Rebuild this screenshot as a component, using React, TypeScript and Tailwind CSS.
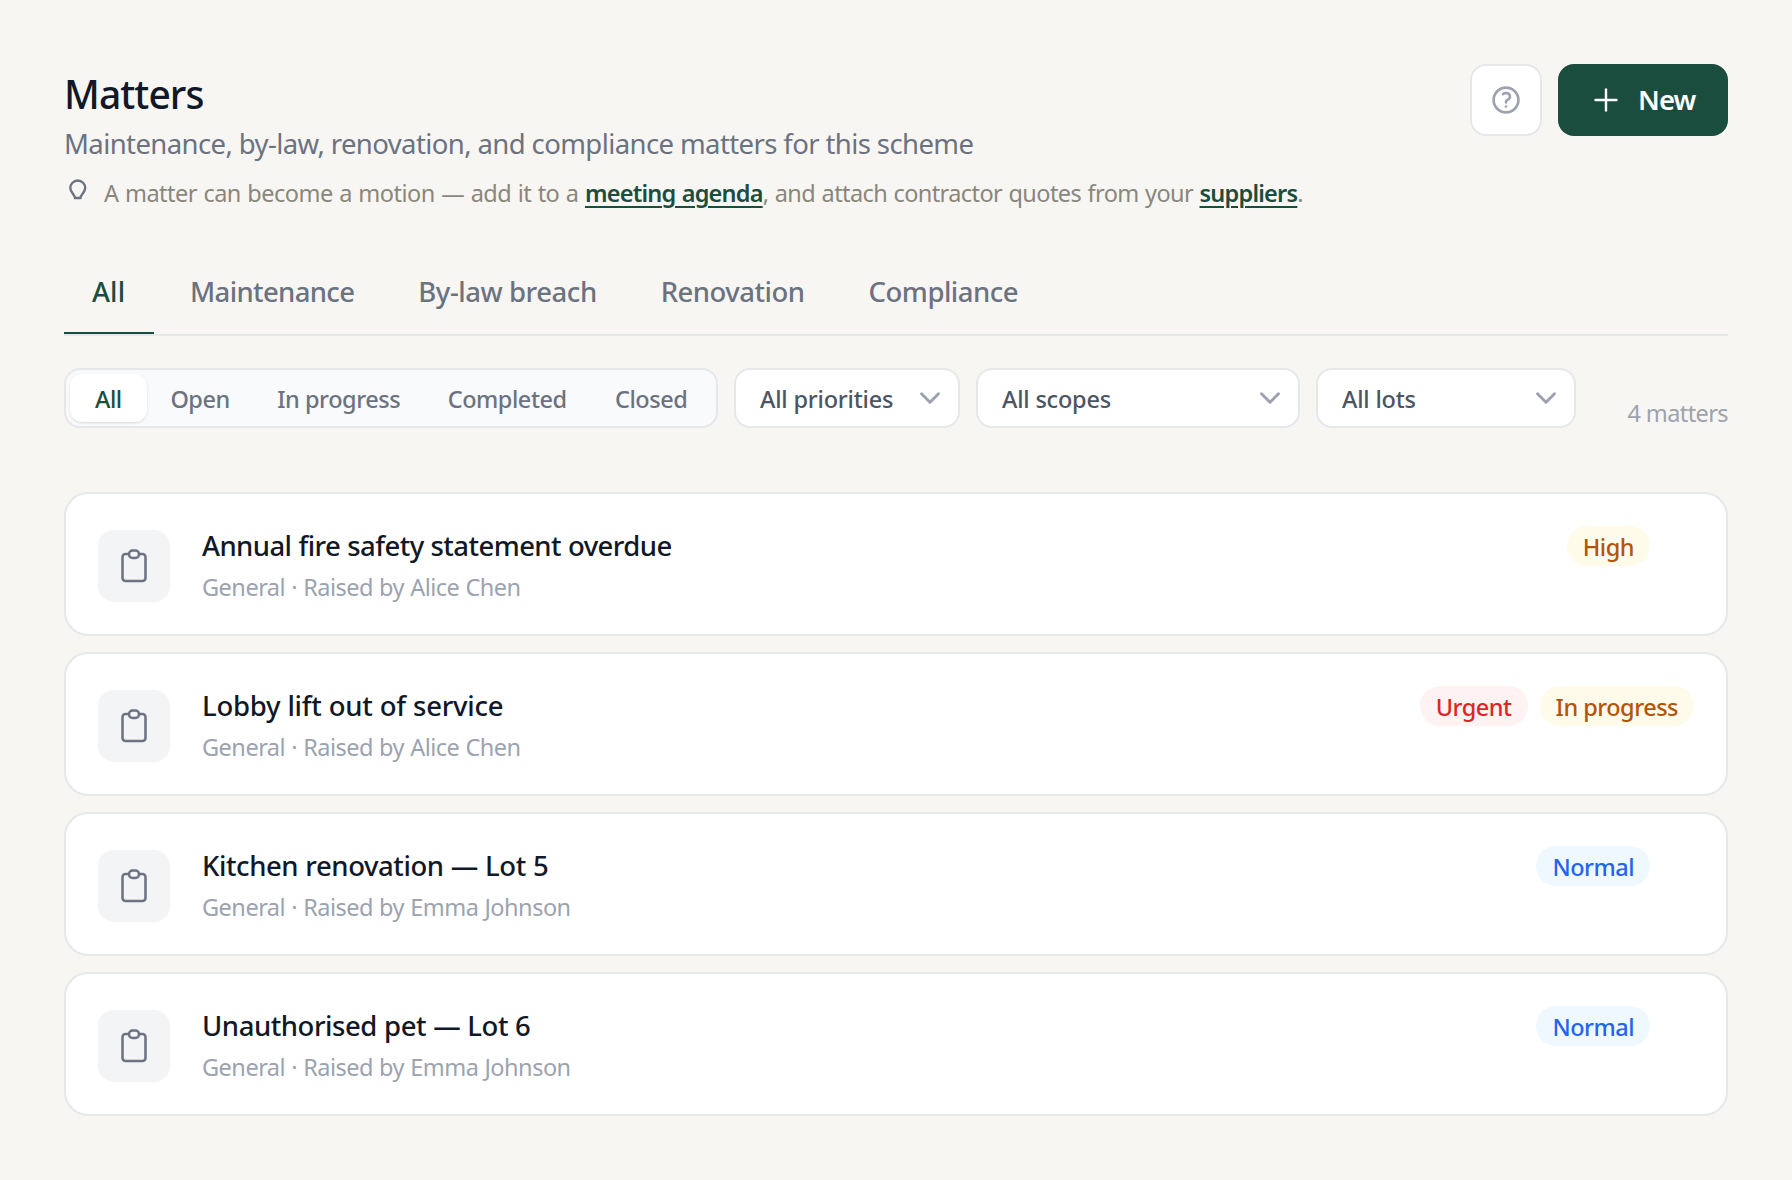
import React, { useState } from "react";
import { ChevronDown, Plus } from "lucide-react";
import clsx from "clsx";

type Tone = "amber" | "red" | "blue";

interface Matter {
  title: string;
  tracking: string;
  meta: string;
  priority: string;
  priorityTone: Tone;
  status?: string;
}

const TABS = [
  { label: "All", tracking: "tracking-[0.1px]" },
  { label: "Maintenance", tracking: "tracking-[-0.65px]" },
  { label: "By-law breach", tracking: "tracking-[-0.45px]" },
  { label: "Renovation", tracking: "tracking-[-0.5px]" },
  { label: "Compliance", tracking: "tracking-[-0.5px]" },
];

const STATUSES = [
  { label: "All", width: "w-[77px]" },
  { label: "Open", width: "w-[107px]" },
  { label: "In progress", width: "w-[171px]" },
  { label: "Completed", width: "w-[167px]" },
  { label: "Closed", width: "w-[122px]" },
];

const SELECTS = [
  { label: "All priorities", width: "w-[226px]" },
  { label: "All scopes", width: "w-[324px]" },
  { label: "All lots", width: "w-[260px]" },
];

const MATTERS: Matter[] = [
  {
    title: "Annual fire safety statement overdue",
    tracking: "tracking-[-0.57px]",
    meta: "General · Raised by Alice Chen",
    priority: "High",
    priorityTone: "amber",
  },
  {
    title: "Lobby lift out of service",
    tracking: "tracking-[-0.28px]",
    meta: "General · Raised by Alice Chen",
    priority: "Urgent",
    priorityTone: "red",
    status: "In progress",
  },
  {
    title: "Kitchen renovation — Lot 5",
    tracking: "tracking-[-0.42px]",
    meta: "General · Raised by Emma Johnson",
    priority: "Normal",
    priorityTone: "blue",
  },
  {
    title: "Unauthorised pet — Lot 6",
    tracking: "tracking-[-0.45px]",
    meta: "General · Raised by Emma Johnson",
    priority: "Normal",
    priorityTone: "blue",
  },
];

const TONES: Record<Tone, string> = {
  amber: "bg-[#fffbeb] text-[#b45309]",
  red: "bg-[#fef2f2] text-[#dc2626]",
  blue: "bg-[#eff8ff] text-[#2563eb]",
};

const BulbIcon: React.FC = () => (
  <svg
    viewBox="0 0 24 24"
    fill="none"
    stroke="currentColor"
    strokeWidth={2.4}
    strokeLinejoin="round"
    className="mt-1.5 ml-0.5 h-6 w-6"
  >
    <path d="M9 20h5.500c0-3.500 4.700-5.500 4.700-10a7.400 7.400 0 0 0-14.900 0c0 4.500 4.700 6.500 4.700 10z" />
  </svg>
);

const HelpIcon: React.FC = () => (
  <svg
    viewBox="0 0 24 24"
    fill="none"
    stroke="currentColor"
    strokeWidth={2}
    strokeLinecap="round"
    strokeLinejoin="round"
    className="h-8 w-8"
  >
    <path d="M9.879 7.519c1.171-1.025 3.071-1.025 4.242 0 1.172 1.025 1.172 2.687 0 3.712-.203.179-.43.326-.67.442-.745.361-1.450.999-1.450 1.827v.250" />
    <circle cx="12" cy="12" r="9.300" />
    <path d="M12 16.900h.01" />
  </svg>
);

const ClipboardIcon: React.FC = () => (
  <svg
    viewBox="0 0 32 36"
    fill="none"
    stroke="currentColor"
    strokeWidth={2.5}
    strokeLinejoin="round"
    className="h-9 w-8"
  >
    <path d="M11 6H7.500a3 3 0 0 0-3 3v21a3 3 0 0 0 3 3h17a3 3 0 0 0 3-3V9a3 3 0 0 0-3-3H21" />
    <rect x="11" y="2.500" width="10" height="7.500" rx="3.500" />
  </svg>
);

const Pill: React.FC<{ tone: Tone; children: React.ReactNode }> = ({
  tone,
  children,
}) => (
  <span
    className={clsx(
      "flex h-10 items-center rounded-full px-4 pt-1 text-[23.5px] font-medium tracking-[-0.5px]",
      TONES[tone],
    )}
  >
    {children}
  </span>
);

const MatterCard: React.FC<{ matter: Matter }> = ({ matter }) => (
  <li className="flex h-36 items-start rounded-3xl border-2 border-[#e5e7eb] bg-white px-8 pt-[30px]">
    <div className="mt-1.5 flex h-[72px] w-[72px] items-center justify-center rounded-2xl bg-[#f3f4f6] text-[#6b7280]">
      <ClipboardIcon />
    </div>
    <div className="ml-8 flex-1 whitespace-nowrap">
      <h2
        className={clsx(
          "text-[27.5px] leading-[43px] font-medium text-[#111827] [word-spacing:0.4px]",
          matter.tracking,
        )}
      >
        {matter.title}
      </h2>
      <p className="text-[23.5px] leading-[40px] tracking-[-0.5px] text-[#9ca3af] [word-spacing:0.5px]">
        {matter.meta}
      </p>
    </div>
    <div className={clsx("mt-0.5 flex gap-3", !matter.status && "mr-11")}>
      <Pill tone={matter.priorityTone}>{matter.priority}</Pill>
      {matter.status && <Pill tone="amber">{matter.status}</Pill>}
    </div>
  </li>
);

export default function App() {
  const [tab, setTab] = useState("All");
  const [status, setStatus] = useState("All");

  return (
    <main className="min-h-[1180px] bg-[#f8f6f2] p-16 font-['Noto_Sans','Open_Sans',sans-serif]">
      <header className="flex h-[152px] items-start justify-between">
        <div className="whitespace-nowrap">
          <h1 className="pt-1 text-[39px] leading-[52px] font-medium tracking-[-0.9px] text-[#111827]">
            Matters
          </h1>
          <p className="mt-1 text-[27.5px] leading-[40px] tracking-[-0.6px] text-[#6b7280]">
            Maintenance, by-law, renovation, and compliance matters for this scheme
          </p>
          <div className="mt-2 flex text-[#6b7280]">
            <BulbIcon />
            <p className="ml-3.5 pt-px text-[23.5px] leading-[40px] tracking-[-0.52px] text-[#8a867c] [word-spacing:0.9px]">
              A matter can become a motion — add it to a{" "}
              <a className="font-semibold tracking-[-0.78px] text-[#1b4d3e] underline decoration-2 underline-offset-4">
                meeting agenda
              </a>
              <span className="tracking-[-0.6px]">
                , and attach contractor quotes from your{" "}
              </span>
              <a className="font-semibold tracking-[-0.78px] text-[#1b4d3e] underline decoration-2 underline-offset-4">
                suppliers
              </a>
              .
            </p>
          </div>
        </div>
        <div className="flex gap-4">
          <button className="flex h-[72px] w-[72px] items-center justify-center rounded-2xl border-2 border-[#e5e7eb] bg-white text-[#9ca3af]">
            <HelpIcon />
          </button>
          <button className="flex h-[72px] w-[170px] items-center rounded-2xl bg-[#1b4d3e] pl-[30px] text-[27.5px] font-semibold tracking-[-0.9px] text-white">
            <Plus size={36} strokeWidth={1.6} />
            <span className="ml-3.5">New</span>
          </button>
        </div>
      </header>

      <nav className="mt-10 flex h-20 gap-2 border-b-2 border-[#e5e7eb]">
        {TABS.map(({ label, tracking }) => (
          <button
            key={label}
            onClick={() => setTab(label)}
            className={clsx(
              "flex h-[78px] min-w-[90px] border-b-2 px-7 pt-4 text-[27.5px] leading-[39px] font-medium",
              tracking,
              tab === label
                ? "border-[#1b4d3e] text-[#1b4d3e]"
                : "border-transparent text-[#6b7280]",
            )}
          >
            {label}
          </button>
        ))}
      </nav>

      <div className="mt-8 flex h-[60px] gap-4 text-[23.5px] font-medium">
        <div className="flex w-[654px] rounded-2xl border-2 border-[#e5e7eb] bg-[#f9fafc] p-1 tracking-[-0.45px]">
          {STATUSES.map(({ label, width }) => (
            <button
              key={label}
              onClick={() => setStatus(label)}
              className={clsx(
                "flex h-12 items-center justify-center rounded-xl pt-1 whitespace-nowrap",
                width,
                status === label
                  ? "bg-white text-[#1b4d3e] shadow-sm"
                  : "text-[#6b7280]",
              )}
            >
              {label}
            </button>
          ))}
        </div>
        {SELECTS.map(({ label, width }) => (
          <button
            key={label}
            className={clsx(
              "flex items-center justify-between rounded-2xl border-2 border-[#e5e7eb] bg-white pr-[11px] pl-6 tracking-[-0.2px] whitespace-nowrap text-[#4b5563]",
              width,
            )}
          >
            <span className="pt-1">{label}</span>
            <ChevronDown
              size={34}
              strokeWidth={2.1}
              className="text-[#9ca3af]"
            />
          </button>
        ))}
        <span className="ml-auto pt-7 leading-[35px] font-normal tracking-[-0.6px] text-[#9ca3af]">
          4 matters
        </span>
      </div>

      <ul className="mt-16 flex flex-col gap-4">
        {MATTERS.map((matter) => (
          <MatterCard key={matter.title} matter={matter} />
        ))}
      </ul>
    </main>
  );
}
